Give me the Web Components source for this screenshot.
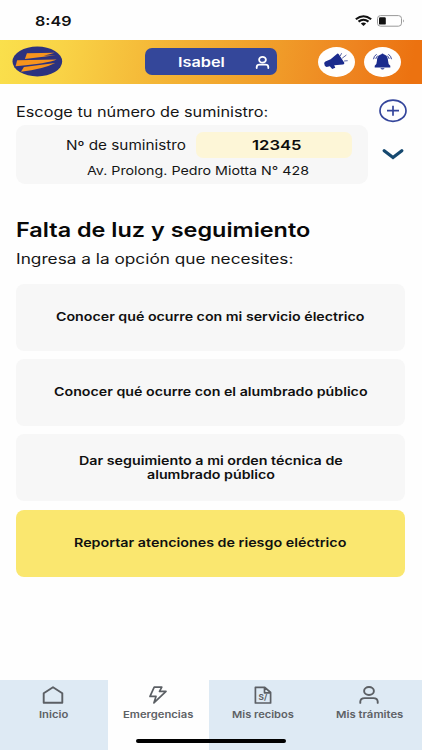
<!DOCTYPE html>
<html lang="es">
<head>
<meta charset="utf-8">
<title>Falta de luz y seguimiento</title>
<style>
html,body{margin:0;height:100%;background:#fefefe}
</style>
</head>
<body>
<outage-app></outage-app>
<script>
const define = (name, html, extra) => {
  const t = document.createElement('template');
  t.innerHTML = html;
  customElements.define(name, class extends HTMLElement {
    constructor() {
      super();
      this.attachShadow({mode: 'open'}).append(t.content.cloneNode(true));
    }
    connectedCallback() { if (extra) extra(this); }
  });
};

/* One line of text in extended letterforms, fitted to a given width */
define('wide-text', `<style>
:host{display:block;white-space:nowrap;flex:none}
span{display:inline-block;transform-origin:0 50%;vertical-align:top}
</style><span><slot></slot></span>`, el => {
  const w = +el.getAttribute('w');
  const s = el.shadowRoot.querySelector('span');
  el.style.width = w + 'px';
  el.style.fontSize = el.getAttribute('size') + 'px';
  s.style.transform = 'scaleX(' + w / s.offsetWidth + ')';
});

define('status-bar', `<style>
:host{display:flex;height:40.3px;box-sizing:border-box;padding:10.7px 17px 9px 34.5px;align-items:center;font-weight:600;color:#111}
i{flex:1}
svg{display:block}
.w{margin-right:5px}
</style>
<wide-text w="37" size="13.5">8:49</wide-text><i></i>
<svg class="w" width="17" height="11" viewBox="0 0 16 11" preserveAspectRatio="none"><path d="M.8 4.2Q8-1.8 15.2 4.2M3.3 6.6Q8 2.8 12.7 6.6" fill="none" stroke="#111" stroke-width="2"/><path d="M5.5 8.5Q8 6.6 10.5 8.5L8 10.9z" fill="#111"/></svg>
<svg width="28" height="12" viewBox="0 0 28 12"><rect x=".5" y=".6" width="24" height="10.6" rx="3" fill="none" stroke="#999"/><rect x="2" y="2.2" width="6.8" height="7.4" rx="1.2" fill="#111"/><path d="M26 4.2q1.8 1.7 0 3.4z" fill="#888"/></svg>`);

define('round-button', `<style>
:host{display:flex;width:37px;height:30px;border-radius:50%;background:#fffefd;align-items:center;justify-content:center}
::slotted(svg){display:block}
</style><slot></slot>`);

define('app-header', `<style>
:host{display:flex;height:43.4px;box-sizing:border-box;align-items:center;padding:0 21.5px 0 12px;background:linear-gradient(100deg,#fae04c 0%,#f9d346 15%,#f4b737 37%,#f09c29 65%,#ee8420 83%,#ec7210 97%)}
svg{display:block}
.user{display:flex;align-items:center;box-sizing:border-box;width:133px;height:27px;margin-left:82.3px;margin-right:40.6px;padding:1px 7.2px 0 33.3px;background:#34479a;border-radius:7px;color:#fff;font-weight:600;justify-content:space-between}
round-button+round-button{margin-left:9px}
</style>
<svg width="51" height="31" viewBox="0 0 51 31"><ellipse cx="25.5" cy="15.5" rx="25" ry="15" fill="#2c327f"/><g fill="#f7941d"><path d="M15 7.2L43 6.7 32 9.7 44 9.1 13 13z"/><path d="M5.2 14.2L45 13.6Q36 17.7 3.6 20.2z"/><path d="M12 21L43.5 17.1Q31 23.5 9 25.8z"/></g></svg>
<div class="user"><wide-text w="47" size="13.5">Isabel</wide-text>
<svg width="15" height="13" viewBox="0 0 15 13" fill="none" stroke="#fff" stroke-width="1.8" stroke-linecap="round"><ellipse cx="7.5" cy="3.8" rx="3.4" ry="2.9"/><path d="M1.7 12V11Q1.8 8.7 4.6 8.7H10.4Q13.2 8.7 13.3 11V12"/></svg></div>
<round-button><svg width="26" height="19" viewBox="0 0 26 19" fill="#1b2b8d"><path d="M1.2 11.5Q1 10.2 2.4 9.4L7.6 7.3 13.6 2.2Q14.7 1 15.8 2.3L21.3 10.8Q21.6 12.4 20 12.4L11.2 13.2 12.3 15.8 9.2 17 6.8 14.3 3.6 15Q1.4 14.6 1.2 11.5z"/><path d="M17.2 4L18.6 1.2M19.2 6.2L23.4 3M21.1 9L24.7 8.7" fill="none" stroke="#4b579f" stroke-width=".9"/></svg></round-button>
<round-button><svg width="21" height="18" viewBox="0 0 21 18" fill="#1b2b8d"><path d="M10.5 1.3C14 1.3 15.9 3.8 16 7.5Q16 11 18.3 12.8V14.4H2.7V12.8Q5 11 5 7.5C5.1 3.8 7 1.3 10.5 1.3z"/><rect x="9.5" y=".5" width="2" height="2" rx="1"/><path d="M8.3 15.3h4.4q-2.2 2.6-4.4 0z"/><path d="M1.5 6.2Q1.8 3.2 4.6 1.2M3.8 5.9Q4.3 4 5.8 2.6M19.5 6.2Q19.2 3.2 16.4 1.2M17.2 5.9Q16.7 4 15.2 2.6" fill="none" stroke="#1b2b8d" stroke-width=".9"/></svg></round-button>`);

define('supply-picker', `<style>
:host{display:flex;justify-content:space-between;padding:15.3px 15px 0 16.5px;color:#151515}
.left{width:352px;margin-left:-.2px}
.label{line-height:25px}
.box{margin-top:1.2px;height:58.5px;box-sizing:border-box;padding-top:7px;background:#f7f7f7;border-radius:9px}
.row{display:flex;align-items:center;height:26px;padding-left:49.3px;gap:10.3px}
.num{display:flex;justify-content:center;align-items:center;width:156px;height:25.5px;border-radius:7px;background:#fdf6d7;font-weight:600;color:#0c0c0c;padding-left:7px;box-sizing:border-box}
.addr{margin:4.9px 0 0 70.7px;line-height:16px}
.side{display:flex;flex-direction:column;align-items:center;gap:25px}
svg{display:block}
</style>
<div class="left">
<div class="label"><wide-text w="252" size="14">Escoge tu número de suministro:</wide-text></div>
<div class="box">
<div class="row"><wide-text w="120" size="13">Nº de suministro</wide-text><div class="num"><wide-text w="50" size="13.3">12345</wide-text></div></div>
<div class="addr"><wide-text w="222" size="12">Av. Prolong. Pedro Miotta N° 428</wide-text></div>
</div></div>
<div class="side">
<svg width="28" height="24" viewBox="0 0 28 24" fill="none" stroke="#34459b"><ellipse cx="14" cy="11.7" rx="13" ry="10.6" stroke-width="1.7"/><path d="M8 11.7H20M14 6.7V16.7" stroke-width="1.7"/></svg>
<svg width="22" height="13" viewBox="0 0 22 13"><path d="M2.2 2.8L11 9.6 19.8 2.8" fill="none" stroke="#15486f" stroke-width="3.2" stroke-linecap="round"/></svg>
</div>`);

define('option-card', `<style>
:host{display:flex;flex-direction:column;align-items:center;justify-content:center;height:67px;border-radius:8px;background:#f7f7f7;font-weight:600;color:#101010;line-height:14px}
:host([highlight]){background:#fae76f}
</style><slot></slot>`);

define('tab-item', `<style>
:host{display:flex;flex-direction:column;align-items:center;box-sizing:border-box;height:70px;padding-top:5px;background:#deeaf4;color:#5d6165;font-weight:600;line-height:12px}
:host([active]){background:#fefefe}
::slotted(svg){display:block;margin-bottom:4px;fill:none;stroke:#5b5f64;stroke-width:1.9}
</style><slot></slot>`);

define('tab-bar', `<style>
:host{display:grid;grid-template-columns:108.3px 100.7px 108px 105px;position:relative}
.home{position:absolute;left:136px;top:59px;width:150px;height:3.7px;border-radius:2px;background:#000}
</style><slot></slot><div class="home"></div>`);

define('outage-app', `<style>
:host{display:flex;flex-direction:column;width:422px;height:750px;overflow:hidden;background:#fefefe;font-family:Inter,"Liberation Sans",sans-serif}
main{flex:1;padding:32.5px 17px 0 16.3px}
h1{margin:0;font-weight:600;line-height:28px;color:#080808}
p{margin:2.8px 0 12.7px;line-height:24px;color:#151515}
.list{display:flex;flex-direction:column;gap:8.3px}
.first{padding-right:2px}
.mid{padding-right:1px}
</style>
<status-bar></status-bar>
<app-header></app-header>
<supply-picker></supply-picker>
<main>
<h1><wide-text w="294" size="20">Falta de luz y seguimiento</wide-text></h1>
<p><wide-text w="277" size="14">Ingresa a la opción que necesites:</wide-text></p>
<div class="list">
<option-card><wide-text w="309" size="12">Conocer qué ocurre con mi servicio électrico</wide-text></option-card>
<option-card><wide-text w="314" size="12">Conocer qué ocurre con el alumbrado público</wide-text></option-card>
<option-card><wide-text w="264" size="12">Dar seguimiento a mi orden técnica de</wide-text><wide-text w="128" size="12">alumbrado público</wide-text></option-card>
<option-card highlight><wide-text w="273" size="12">Reportar atenciones de riesgo eléctrico</wide-text></option-card>
</div>
</main>
<tab-bar>
<tab-item class="first"><svg width="22" height="20" viewBox="0 0 22 20"><path d="M1.7 8.2L11 2.2 20.3 8.2V17.8H1.7z" stroke-linejoin="round"/></svg><wide-text w="29" size="9.3">Inicio</wide-text></tab-item>
<tab-item active class="mid"><svg width="22" height="20" viewBox="0 0 22 20"><path d="M7.2 2.2H14.8L12.5 6.4H19L6.9 17.9 9 11.4H3z" stroke-width="1.7" stroke-linejoin="round"/></svg><wide-text w="70" size="9.3">Emergencias</wide-text></tab-item>
<tab-item><svg width="22" height="20" viewBox="0 0 22 20"><path d="M3.4 2.3H12.8L18.6 7.5V18H3.4zM12.5 2.5V7.8H18.4" stroke-linejoin="round" stroke-width="1.7"/><text x="6.6" y="15.3" font-size="7.8" font-weight="700" fill="#5b5f64" stroke="none" textLength="8.6" lengthAdjust="spacingAndGlyphs">S/</text></svg><wide-text w="62" size="9.3">Mis recibos</wide-text></tab-item>
<tab-item><svg width="22" height="20" viewBox="0 0 22 20" stroke-linecap="round"><ellipse cx="11" cy="6" rx="4.9" ry="4"/><path d="M2.3 17.9V16.5Q2.5 13.1 6.6 13.1H15.4Q19.5 13.1 19.7 16.5V17.9"/></svg><wide-text w="67" size="9.3">Mis trámites</wide-text></tab-item>
</tab-bar>`);
</script>
</body>
</html>
